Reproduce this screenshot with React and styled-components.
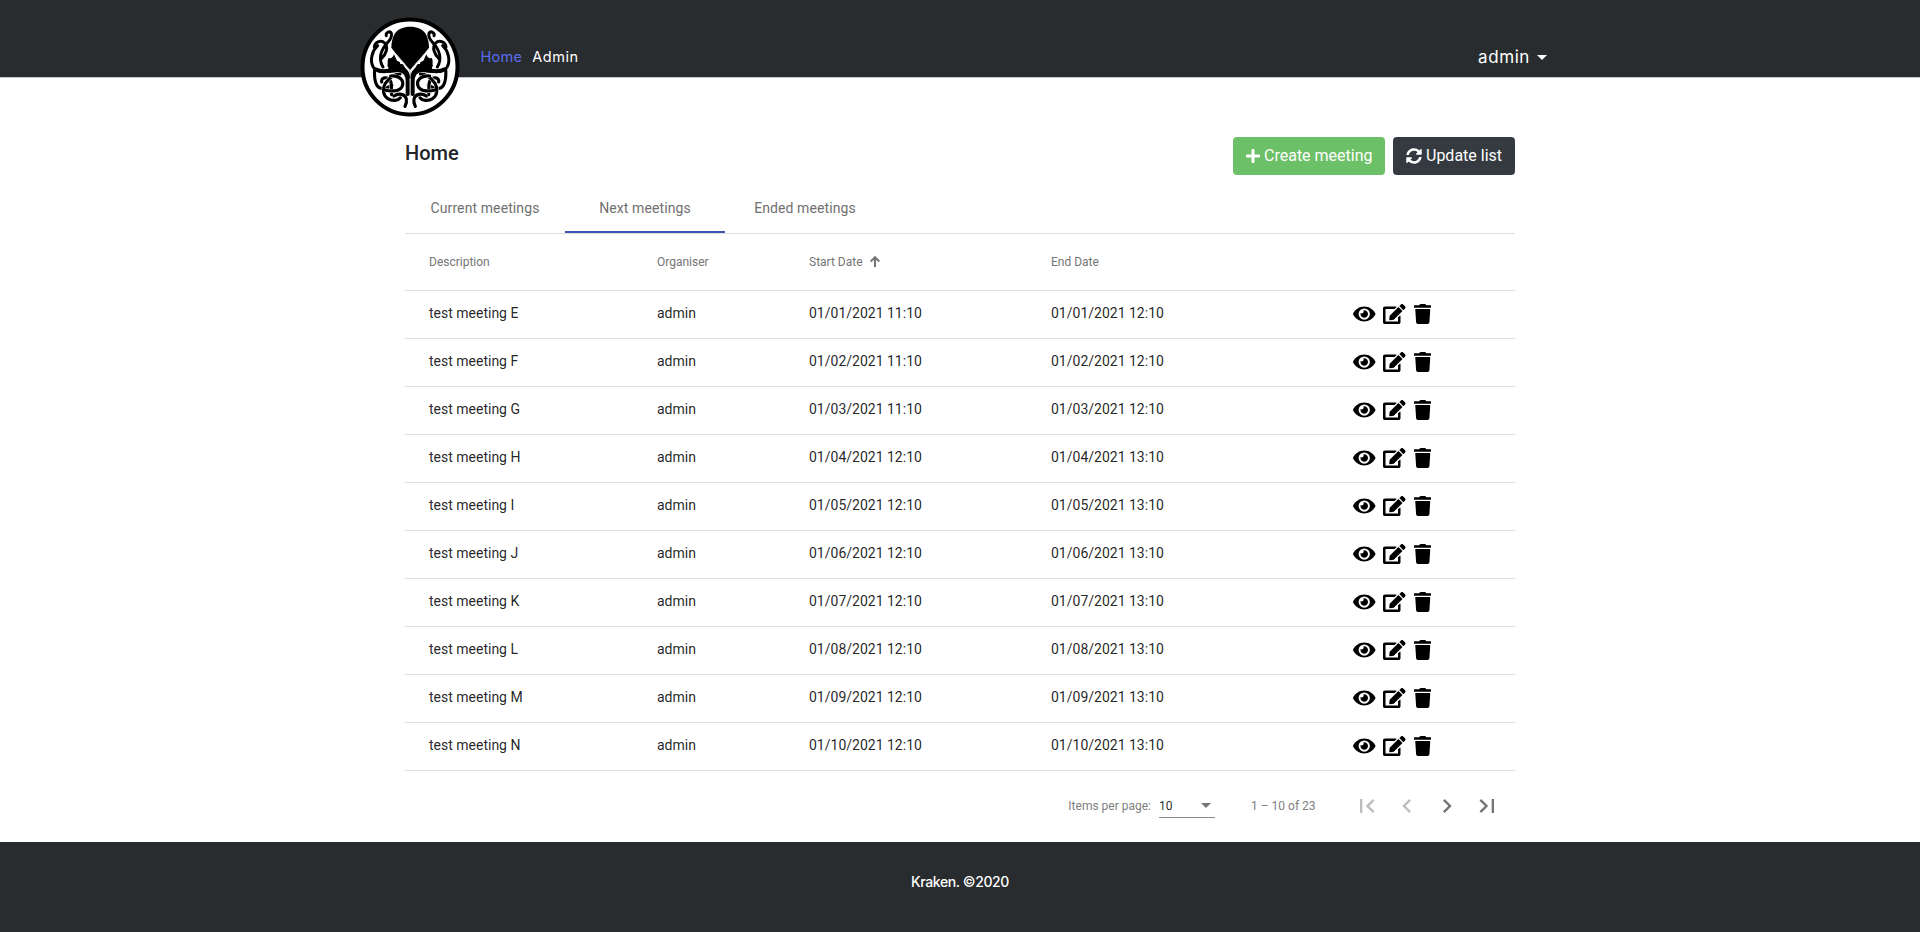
import React from "react";
import styled, { createGlobalStyle } from "styled-components";
import { FaEye, FaEdit, FaTrash, FaPlus, FaSyncAlt } from "react-icons/fa";

const GlobalStyle = createGlobalStyle`
  * { box-sizing: border-box; }
  body {
    margin: 0;
    background: #fff;
    color: #212529;
    font-family: Roboto, "Liberation Sans", sans-serif;
  }
`;

const Page = styled.div`
  display: flex;
  flex-direction: column;
  height: 932px;
  overflow: hidden;
`;

const Navbar = styled.header`
  flex: none;
  height: 78px;
  padding: 17px 373px 0 360px;
  display: flex;
  align-items: flex-start;
  background: #292c2f;
  border-bottom: 1px solid #c4c5c6;
  font-family: Inter, sans-serif;
`;

const Logo = styled.svg`
  flex: none;
  width: 100px;
  height: 100px;
  position: relative;
  z-index: 1;
`;

const NavLinks = styled.nav`
  display: flex;
  gap: 10px;
  margin: 29px auto 0 20.5px;
`;

const NavLink = styled.a`
  font-size: 14.5px;
  line-height: 22px;
  letter-spacing: ${(p) => p.$spacing || "0"};
  color: ${(p) => (p.$active ? "#5a6cf0" : "#fff")};
`;

const UserMenu = styled.div`
  display: flex;
  align-items: center;
  gap: 7px;
  margin-top: 29px;
  font-size: 17px;
  line-height: 22px;
  letter-spacing: 0.6px;
  color: #fff;
`;

const Caret = styled.span`
  border: 5px solid transparent;
  border-top-color: ${(p) => p.$color};
  border-bottom: 0;
`;

const Content = styled.main`
  flex: none;
  width: 1110px;
  height: 764px;
  margin: 0 auto;
  padding-top: 59px;
`;

const TitleBar = styled.div`
  display: flex;
  align-items: flex-start;
  gap: 8px;
  height: 48px;
`;

const Title = styled.h1`
  margin: 0 auto 0 0;
  font-size: 20px;
  font-weight: 500;
  line-height: 32px;
`;

const Button = styled.button`
  display: flex;
  align-items: center;
  gap: 4px;
  width: ${(p) => p.$width};
  height: 38px;
  padding: 0 13px;
  border: 0;
  border-radius: 4px;
  background: ${(p) => p.$color};
  color: #fff;
  font: 400 16px/24px Roboto, sans-serif;
  white-space: nowrap;
  svg { flex: none; }
`;

const PlusIcon = styled(FaPlus)`
  width: 14px;
  height: 16px;
`;

const Tabs = styled.div`
  display: flex;
  height: 49px;
  border-bottom: 1px solid #dfdfdf;
`;

const Tab = styled.div`
  width: 160px;
  height: 48px;
  text-align: center;
  font-size: 14px;
  letter-spacing: 0.1px;
  line-height: 47px;
  color: #707070;
  border-bottom: 2px solid ${(p) => (p.$active ? "#3f51b5" : "transparent")};
`;

const Row = styled.div`
  display: grid;
  grid-template-columns: 228px 152px 242px 302px 1fr;
  align-items: center;
  height: 48px;
  padding: 0 0 3px 24px;
  border-bottom: 1px solid #dfdfdf;
  font-size: 14px;
  color: rgba(0, 0, 0, 0.87);
`;

const HeadRow = styled(Row)`
  height: 57px;
  padding-bottom: 0;
  font-size: 12px;
  color: #757575;
`;

const SortHeader = styled.span`
  display: flex;
  align-items: center;
  gap: 7px;
  svg { margin-bottom: 2px; }
`;

const Actions = styled.span`
  display: flex;
  align-items: center;
  gap: 7.5px;
  padding-top: 2px;
  color: #000;
  svg {
    width: 22.5px;
    height: 20px;
  }
  svg:last-child {
    width: 17.5px;
    margin-left: 0.5px;
  }
`;

const Paginator = styled.div`
  display: flex;
  align-items: center;
  height: 71px;
  padding: 0 8px 2px 0;
  justify-content: flex-end;
  font-size: 12px;
  color: #808080;
`;

const PageSize = styled.div`
  display: flex;
  align-items: center;
  justify-content: space-between;
  width: 56px;
  height: 24px;
  margin: 1px 36px 0 8px;
  padding: 0 4px 0 0;
  border-bottom: 1px solid #8c8c8c;
  color: rgba(0, 0, 0, 0.87);
`;

const Range = styled.span`
  width: 96px;
`;

const PageButton = styled.span`
  display: flex;
  justify-content: center;
  width: 40px;
  color: ${(p) => (p.$disabled ? "#bdbdbd" : "#757575")};
`;

const Footer = styled.footer`
  flex: 1;
  padding-top: 29px;
  background: #292c2f;
  color: #fff;
  text-align: center;
  font: 500 14px/22px Inter, sans-serif;
  letter-spacing: -0.4px;
`;

const upperTentacles = [
  "M109 107C106 98 119 91 124 100C128 112 120 121 110 131C93 150 84 176 99 201",
  "M73 141C75 124 94 119 104 129C116 142 108 163 94 176",
  "M83 137C67 151 58 181 70 202C83 220 119 214 143 211",
];

const lowerTentacles = [
  "M74 206C72 236 76 260 92 265C108 270 116 260 126 256",
  "M95 246C92 232 112 229 120 240C128 252 122 270 125 284",
  "M150 222C128 222 116 236 106 250C98 264 98 285 112 295C128 305 144 302 151 293",
  "M122 228C150 226 164 243 156 260C147 276 120 274 105 270",
  "M132 288C146 278 166 282 169 297C171 307 168 314 165 319",
];

const Half = () => (
  <g fill="none" strokeLinecap="round">
    {upperTentacles.map((d) => (
      <path key={d} d={d} stroke="#000" strokeWidth="9" />
    ))}
    {lowerTentacles.map((d) => (
      <g key={d}>
        <path d={d} stroke="#fff" strokeWidth="12" strokeLinecap="butt" />
        <path d={d} stroke="#000" strokeWidth="9.500" />
      </g>
    ))}
    <path d="M80 209C95 220 123 209 148 210C164 212 173 224 173 244L173 282" stroke="#000" strokeWidth="12" />
    <path d="M121 205C151 201 171 208 174 232" stroke="#000" strokeWidth="13" />
    <path
      d="M132 163C128 173 124 177 117 173C110 181 115 188 112 199C119 206 133 207 144 201L168 208L157 190L141 182Z"
      fill="#000"
    />
  </g>
);

const KrakenLogo = () => (
  <Logo viewBox="30 51 300 300" aria-label="Kraken">
    <circle cx="180" cy="201" r="142.5" fill="#fff" stroke="#000" strokeWidth="12" />
    <Half />
    <g transform="translate(361 0) scale(-1 1)">
      <Half />
    </g>
    <path
      d="M180.500 80C160 80 145 86 134 101C127 113 124 128 124 143L137 160L180 210L224 160L237 143C237 128 234 113 227 101C216 86 201 80 180.500 80Z"
      fill="#000"
    />
    <path d="M137 161L180 212L224 161" fill="none" stroke="#bbb" strokeWidth="2" />
    <path d="M149 181L166 193L151 192ZM212 181L195 193L210 192Z" fill="#fff" />
    <path d="M180.500 212V290" stroke="#999" strokeWidth="2" />
  </Logo>
);

const rows = [
  ["E", "01/01/2021", 11],
  ["F", "01/02/2021", 11],
  ["G", "01/03/2021", 11],
  ["H", "01/04/2021", 12],
  ["I", "01/05/2021", 12],
  ["J", "01/06/2021", 12],
  ["K", "01/07/2021", 12],
  ["L", "01/08/2021", 12],
  ["M", "01/09/2021", 12],
  ["N", "01/10/2021", 12],
];

const pageIcons = [
  ["M18.41 16.59L13.82 12l4.59-4.59L17 6l-6 6 6 6zM6 6h2v12H6z", true],
  ["M15.41 7.41L14 6l-6 6 6 6 1.41-1.41L10.83 12z", true],
  ["M10 6L8.59 7.41 13.17 12l-4.58 4.59L10 18l6-6z", false],
  ["M5.59 7.41L10.18 12l-4.59 4.59L7 18l6-6-6-6zM16 6h2v12h-2z", false],
];

export default function App() {
  return (
    <Page>
      <GlobalStyle />
      <Navbar>
        <KrakenLogo />
        <NavLinks>
          <NavLink $active $spacing="0.3px">Home</NavLink>
          <NavLink $spacing="0.5px">Admin</NavLink>
        </NavLinks>
        <UserMenu>
          admin <Caret $color="#fff" />
        </UserMenu>
      </Navbar>
      <Content>
        <TitleBar>
          <Title>Home</Title>
          <Button $color="#6cc067" $width="152px">
            <PlusIcon />
            Create meeting
          </Button>
          <Button $color="#343a40" $width="122px">
            <FaSyncAlt size={16} />
            Update list
          </Button>
        </TitleBar>
        <Tabs>
          <Tab>Current meetings</Tab>
          <Tab $active>Next meetings</Tab>
          <Tab>Ended meetings</Tab>
        </Tabs>
        <HeadRow>
          <span>Description</span>
          <span>Organiser</span>
          <SortHeader>
            Start Date
            <svg width="10" height="11" viewBox="0 0 10 11" fill="none" stroke="#757575" strokeWidth="2">
              <path d="M5 11V1.500M0.700 5.500L5 1.200L9.300 5.500" />
            </svg>
          </SortHeader>
          <span>End Date</span>
        </HeadRow>
        {rows.map(([name, date, hour]) => (
          <Row key={name}>
            <span>test meeting {name}</span>
            <span>admin</span>
            <span>{date} {hour}:10</span>
            <span>{date} {hour + 1}:10</span>
            <Actions>
              <FaEye />
              <FaEdit />
              <FaTrash />
            </Actions>
          </Row>
        ))}
        <Paginator>
          Items per page:
          <PageSize>
            10 <Caret $color="#757575" />
          </PageSize>
          <Range>1 – 10 of 23</Range>
          {pageIcons.map(([d, disabled]) => (
            <PageButton key={d} $disabled={disabled}>
              <svg width="28" height="28" viewBox="0 0 24 24" fill="currentColor">
                <path d={d} />
              </svg>
            </PageButton>
          ))}
        </Paginator>
      </Content>
      <Footer>Kraken. ©2020</Footer>
    </Page>
  );
}
